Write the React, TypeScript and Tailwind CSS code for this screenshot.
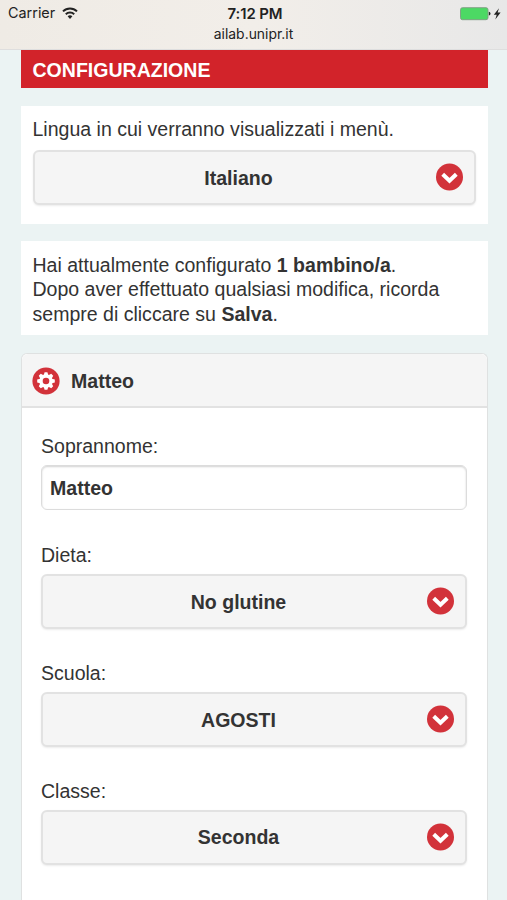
import { useId, useState } from "react";

const ICON_RED = "#d2323a";

function WifiIcon() {
  return (
    <svg width="16" height="13" viewBox="0 0 16 13" fill="none" stroke="#222" strokeWidth="2">
      <path d="M1 4.4a10 10 0 0 1 14 0" />
      <path d="M3.8 7.3a6 6 0 0 1 8.4 0" />
      <path d="M8 12 5.6 9.3a3.5 3.5 0 0 1 4.8 0z" fill="#222" stroke="none" />
    </svg>
  );
}

function BatteryIcon() {
  return (
    <svg width="42" height="14" viewBox="0 0 42 14">
      <rect x="0.5" y="0.7" width="27.5" height="12" rx="2" fill="#4cd964" stroke="#7d9c80" strokeWidth="0.9" />
      <path d="M28.8 4.8c2.3.3 2.3 3.5 0 3.8z" fill="#222" />
      <path d="M39 1.2 33.8 7.7h2.900l-1.4 4.7 5.3-6.8h-3z" fill="#222" />
    </svg>
  );
}

function ChevronBadge() {
  return (
    <svg className="-mt-px shrink-0" width="28" height="28" viewBox="0 0 28 28">
      <circle cx="13.5" cy="14" r="13.5" fill={ICON_RED} />
      <path d="M6.700 11.2 13.500 17.7l6.8-6.5" fill="none" stroke="#fff" strokeWidth="4" />
    </svg>
  );
}

function GearBadge() {
  return (
    <svg className="-mt-px shrink-0" width="28" height="28" viewBox="0 0 28 28">
      <circle cx="14" cy="14" r="13.6" fill={ICON_RED} />
      <g fill="#fff">
        <circle cx="14" cy="14" r="6.7" />
        {[0, 45, 90, 135].map((deg) => (
          <path key={deg} d="M12.6 5.2h2.8l.9 3v11.6l-.9 3h-2.8l-.9-3V8.2z" transform={`rotate(${deg} 14 14)`} />
        ))}
      </g>
      <circle cx="14" cy="14" r="3.3" fill={ICON_RED} />
    </svg>
  );
}

function SelectButton({ value }: { value: string }) {
  return (
    <button
      type="button"
      className="flex h-[55px] w-full items-center rounded-md border-2 border-[#e2e2e2] bg-[#f5f5f5] pl-[7px] pr-[10px] font-bold shadow-[0_1px_2px_rgba(0,0,0,0.08)]"
    >
      <span className="flex-1 pt-px text-center">{value}</span>
      <ChevronBadge />
    </button>
  );
}

function SelectField({ label, value }: { label: string; value: string }) {
  return (
    <div>
      <div className="mb-[7px] h-6">{label}</div>
      <SelectButton value={value} />
    </div>
  );
}

const fields = [
  { label: "Dieta:", value: "No glutine" },
  { label: "Scuola:", value: "AGOSTI" },
  { label: "Classe:", value: "Seconda" },
];

export default function App() {
  const nameId = useId();
  const [nickname, setNickname] = useState("Matteo");

  return (
    <div className="flex h-[900px] w-[507px] flex-col overflow-hidden bg-[#ebf3f3] font-['Liberation_Sans',Arial,sans-serif] text-[19.55px] leading-[24.4px] text-[#333]">
      <header className="h-[49.5px] shrink-0 border-b border-[#dedede] bg-linear-to-r from-[#efebe5] via-[#f2eee9] to-[#e8e8e8] text-[#222]">
        <div className="grid h-[27px] grid-cols-3 items-center pl-2 pr-[5px] font-[Inter,sans-serif] text-[14px]">
          <div className="flex items-center gap-[7px]">
            <span className="text-[14.4px]">Carrier</span>
            <WifiIcon />
          </div>
          <span className="pt-px text-center text-[14.9px] font-semibold tracking-[-0.1px]">7:12 PM</span>
          <div className="flex justify-end">
            <BatteryIcon />
          </div>
        </div>
        <div className="text-center font-[Inter,sans-serif] text-[13.9px] leading-[14px]">ailab.unipr.it</div>
      </header>

      <main className="ml-[20.5px] mr-[19.5px] flex flex-1 flex-col">
        <h1 className="flex h-[38px] shrink-0 items-center bg-[#d2232a] px-3 pt-[4px] font-bold text-white">CONFIGURAZIONE</h1>

        <section className="mt-[18.5px] h-[118px] shrink-0 bg-white px-3 pt-[11px]">
          <p className="mb-[9px] h-6">Lingua in cui verranno visualizzati i menù.</p>
          <SelectButton value="Italiano" />
        </section>

        <section className="mt-[17px] h-[94px] shrink-0 bg-white px-3 pt-3">
          <p>
            Hai attualmente configurato <b>1 bambino/a</b>.
            <br />
            Dopo aver effettuato qualsiasi modifica, ricorda
            <br />
            sempre di cliccare su <b>Salva</b>.
          </p>
        </section>

        <section className="mt-[18px] flex-1 rounded-t-md border-x-[1.5px] border-t-[1.5px] border-[#dfe1e1] bg-white">
          <h2 className="flex h-[54px] items-center gap-[11px] rounded-t-md border-b-2 border-[#e2e2e2] bg-[#f5f5f5] pl-[10.5px] pt-[2px] font-bold">
            <GearBadge />
            Matteo
          </h2>
          <div className="px-[19.5px] pt-[26px]">
            <label htmlFor={nameId} className="mb-[7px] block h-6">
              Soprannome:
            </label>
            <input
              id={nameId}
              value={nickname}
              onChange={(e) => setNickname(e.target.value)}
              className="block h-[45px] w-full rounded-md border-[1.5px] border-[#dcdcdc] bg-white px-2 pt-[2px] font-bold shadow-[inset_0_1px_2px_rgba(0,0,0,0.18)] outline-none"
            />
            <div className="mt-[33px] space-y-[31.8px]">
              {fields.map((f) => (
                <SelectField key={f.label} label={f.label} value={f.value} />
              ))}
            </div>
          </div>
        </section>
      </main>
    </div>
  );
}
